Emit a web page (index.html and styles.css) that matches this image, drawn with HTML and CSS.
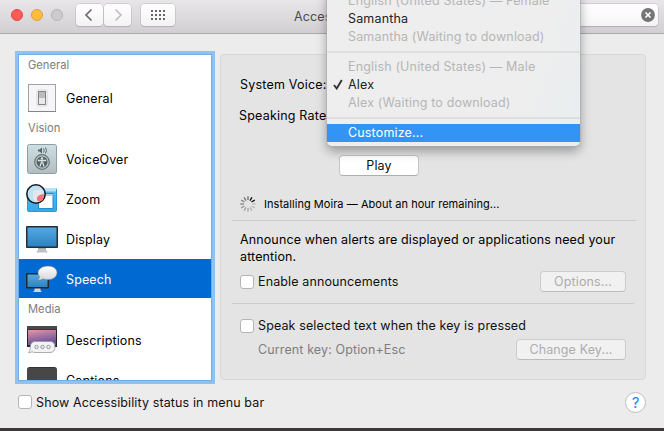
FILE: index.html
```html
<!DOCTYPE html>
<html lang="en">
<head>
<meta charset="utf-8">
<title>Accessibility</title>
<link rel="stylesheet" href="styles.css">
</head>
<body>
<div class="window">
  <header class="titlebar">
    <div class="lights"><i class="red"></i><i class="amber"></i><i class="grey"></i></div>
    <div class="nav">
      <button class="tool"><svg width="27" height="22" viewBox="0 0 27 22"><path d="M15.500 5.500 10 11l5.500 5.500" fill="none" stroke="#6b6b6b" stroke-width="1.700"/></svg></button>
      <button class="tool"><svg width="27" height="22" viewBox="0 0 27 22"><path d="M11.500 5.500 17 11l-5.500 5.500" fill="none" stroke="#bcbcbc" stroke-width="1.500"/></svg></button>
    </div>
    <button class="tool grid"><svg width="34" height="22" viewBox="0 0 34 22"><path d="M10 7h14M10 11h14M10 15h14" stroke="#666" stroke-width="2" stroke-dasharray="2 2"/></svg></button>
    <h1>Accessibility</h1>
    <div class="search"><svg width="14" height="14" viewBox="0 0 14 14"><circle cx="7" cy="7" r="6.900" fill="#757575"/><path d="m4.500 4.500 5 5m0-5-5 5" stroke="#fff" stroke-width="1.700"/></svg></div>
  </header>

  <div class="content">
    <nav class="sidebar">
      <h2 class="first">General</h2>
      <div class="item">
        <svg class="icon" width="32" height="32" viewBox="0 0 32 32"><rect x="2.500" y="2.500" width="27" height="27" fill="#f6f6f8" stroke="#a3a3a5"/><path d="M2 29.500h28" stroke="#858587"/><rect x="11" y="8" width="10" height="16" rx="1" fill="#fff" stroke="#d5d5d7"/><rect x="12.500" y="9.500" width="7" height="13" fill="#e9e9ea" stroke="#858587"/><path d="M13 10h6v6h-6z" fill="#bbbbbd"/></svg>
        <span>General</span>
      </div>
      <h2>Vision</h2>
      <div class="item">
        <svg class="icon" width="32" height="32" viewBox="0 0 32 32"><defs><linearGradient id="vo" x2="0" y2="1"><stop stop-color="#cddfe4"/><stop offset="1" stop-color="#b2bdbf"/></linearGradient></defs><rect x="1.500" y="1.500" width="29" height="29" rx="2" fill="url(#vo)" stroke="#8e9ea2"/><path d="M12 6.500h1.500L16 4.500v6l-2.500-2H12z" fill="#59676b"/><path d="M17.500 5.500q1.500 2 0 4M19.500 4.500q2 3 0 6" fill="none" stroke="#59676b"/><circle cx="16" cy="19" r="7.300" fill="#bccacd" stroke="#657378" stroke-width="1.200"/><circle cx="16" cy="19" r="5.500" fill="#536166"/><circle cx="16" cy="15.500" r="1.200" fill="#d8e2e4"/><path d="M11.800 17.500h8.400M16 17v3m-.7-.5-1.300 4m2.700-4 1.300 4" stroke="#d8e2e4" stroke-width="1.300"/></svg>
        <span>VoiceOver</span>
      </div>
      <div class="item">
        <svg class="icon" width="32" height="32" viewBox="0 0 32 32"><defs><linearGradient id="zm" x2="0" y2="1"><stop stop-color="#58bff4"/><stop offset="1" stop-color="#35a7e8"/></linearGradient></defs><rect x="1.500" y="5.500" width="29" height="23" rx="1" fill="url(#zm)" stroke="#2f97d3"/><path d="M2 5h28v3.500H2z" fill="#b6e1f8"/><path d="M12.500 10.500h14.500v15h-14.500z" fill="#fff" stroke="#1c8dcd"/><path d="M13 11h13.500v2H13z" fill="#c9c9cb"/><circle cx="10" cy="11" r="9.200" fill="#bde2f4" stroke="#191b1d" stroke-width="1.600"/><path d="M7 8.500q0-1.500 2-1.500h7.500v10Q14 19 10 19q-3-2-3-4z" fill="#e5e6e9"/><path d="M11 17q-1-5 6.500-6 1.500 4.500-2.500 7-2.500 1.500-4-1z" fill="#ef7478"/></svg>
        <span>Zoom</span>
      </div>
      <div class="item">
        <svg class="icon" width="32" height="32" viewBox="0 0 32 32"><defs><linearGradient id="screen" x2="0" y2="1"><stop stop-color="#51a9e2"/><stop offset="1" stop-color="#2e83c0"/></linearGradient></defs><path d="M12 23h8v4l2 2.500H10l2-2.500z" fill="#bfc0c2"/><path d="M12 24h8v1.500h-8z" fill="#8a8c8e"/><rect x="0" y="3" width="32" height="22" rx="1" fill="#292c30"/><path d="M1.500 4.500h29v19h-29z" fill="url(#screen)"/></svg>
        <span>Display</span>
      </div>
      <div class="item selected">
        <svg class="icon" width="32" height="32" viewBox="0 0 32 32"><defs><linearGradient id="bubble" x2="0" y2="1"><stop stop-color="#fff"/><stop offset="1" stop-color="#d6d7da"/></linearGradient></defs><path d="M8.500 25h6v2.500l1.500 1.500H7l1.500-1.500z" fill="#d3d6d8"/><rect x="0" y="10" width="23" height="15.500" rx="1" fill="#20282f"/><path d="M1.500 11.500h20v12.500h-20z" fill="url(#screen)"/><path d="M22 3c5.500 0 9 2.900 9 6.700s-3.700 7-9 7c-2 0-3.500-.3-4.800-1-1.600 1.200-3.500 1.500-5.700 1.300q2-1.300 2.200-3.500C12.500 12.500 12 11.200 12 9.700 12 5.900 16.500 3 22 3z" fill="url(#bubble)" stroke="#777d84" stroke-width=".6"/></svg>
        <span>Speech</span>
      </div>
      <h2>Media</h2>
      <div class="item">
        <svg class="icon" width="32" height="32" viewBox="0 0 32 32"><defs><linearGradient id="dusk" x2=".3" y2="1"><stop stop-color="#ed91a5"/><stop offset="1" stop-color="#60519b"/></linearGradient></defs><path d="M1 2h30v21H1z" fill="#252328"/><path d="M1 2h30v3.500H1z" fill="#4a4a4d"/><path d="M2 6h28v15H2z" fill="url(#dusk)"/><path d="M9.500 17.500H24q5 0 5 5.500T24 28.500H10q-3 0-4-.8-1 .9-3.500 1.100 1.800-1.300 1.800-5.800Q4.500 17.500 9.500 17.500z" fill="#f2f2f5" stroke="#98989e" stroke-width=".8"/><g fill="none" stroke="#8b8b91" stroke-width=".9"><circle cx="10.500" cy="23" r="1.700"/><circle cx="16.500" cy="23" r="1.700"/><circle cx="22.500" cy="23" r="1.700"/></g></svg>
        <span>Descriptions</span>
      </div>
      <div class="item">
        <svg class="icon" width="32" height="32" viewBox="0 0 32 32"><rect x="1" y="3" width="30" height="26" rx="2.500" fill="#474747"/><path d="M3 3.500h26" stroke="#333"/></svg>
        <span>Captions</span>
      </div>
    </nav>

    <main class="panel">
      <div class="label voice"><span>System Voice:</span></div>
      <div class="label rate"><span>Speaking Rate:</span></div>
      <button class="button play">Play</button>
      <div class="status">
        <svg width="16" height="16" viewBox="-8 -8 16 16" stroke-width="1.400"><path d="M0-4V-7.800" stroke="#777"/><path d="M0-4V-7.800" stroke="#111" transform="rotate(30)"/><path d="M0-4V-7.800" stroke="#111" transform="rotate(60)"/><path d="M0-4V-7.800" stroke="#c5c5c5" transform="rotate(90)"/><path d="M0-4V-7.800" stroke="#bdbdbd" transform="rotate(120)"/><path d="M0-4V-7.800" stroke="#b5b5b5" transform="rotate(150)"/><path d="M0-4V-7.800" stroke="#aaa" transform="rotate(180)"/><path d="M0-4V-7.800" stroke="#a5a5a5" transform="rotate(210)"/><path d="M0-4V-7.800" stroke="#999" transform="rotate(240)"/><path d="M0-4V-7.800" stroke="#8b8b8b" transform="rotate(270)"/><path d="M0-4V-7.800" stroke="#858585" transform="rotate(300)"/><path d="M0-4V-7.800" stroke="#777" transform="rotate(330)"/></svg>
        <span>Installing Moira — About an hour remaining...</span>
      </div>
      <hr>
      <p>Announce when alerts are displayed or applications need your attention.</p>
      <div class="line enable"><label><i class="check"></i><span>Enable announcements</span></label><button class="button off options">Options...</button></div>
      <hr class="short">
      <label class="speak"><i class="check"></i><span>Speak selected text when the key is pressed</span></label>
      <div class="line key"><span>Current key: Option+Esc</span><button class="button off change">Change Key...</button></div>
    </main>
  </div>

  <footer>
    <label><i class="check"></i><span>Show Accessibility status in menu bar</span></label>
    <button class="help">?</button>
  </footer>

  <div class="menu">
    <div class="option dim">English (United States) — Female</div>
    <div class="option">Samantha</div>
    <div class="option dim">Samantha (Waiting to download)</div>
    <div class="rule"></div>
    <div class="option dim">English (United States) — Male</div>
    <div class="option checked"><svg width="10" height="11" viewBox="0 0 10 11"><path d="m1 6 2.700 3.500L8.800 1" fill="none" stroke="#333" stroke-width="1.900"/></svg>Alex</div>
    <div class="option dim">Alex (Waiting to download)</div>
    <div class="rule last"></div>
    <div class="option active">Customize...</div>
  </div>
</div>
</body>
</html>
```
FILE: styles.css
```css
* { box-sizing: border-box; }
body {
  margin: 0;
  height: 431px;
  overflow: hidden;
  background: #3a3838;
  font: 12.500px/17px Inter, Roboto, sans-serif;
  letter-spacing: .12px;
  color: #111;
}
button { font: inherit; letter-spacing: inherit; padding: 0; margin: 0; }
svg { display: block; flex: none; }
.window { position: relative; height: 428px; background: #ececec; overflow: hidden; display: flex; flex-direction: column; }
.titlebar {
  height: 34px;
  flex: none;
  display: flex;
  align-items: flex-start;
  padding: 4px 5px 0 11px;
  background: linear-gradient(#e8e6e8, #d1cfd1);
  border-bottom: 1px solid #aaa8aa;
}
.lights { display: flex; gap: 8px; padding-top: 5px; width: 65px; }
.lights i { width: 12px; height: 12px; border-radius: 50%; border: 1px solid; }
.lights .red { background: #fc5b57; border-color: #df4744; }
.lights .amber { background: #fdbc40; border-color: #de9f34; }
.lights .grey { background: #cdcbcd; border-color: #b5b3b5; }
.nav { display: flex; gap: 1px; }
.tool { width: 27px; height: 22px; border: 0; border-radius: 4px; background: linear-gradient(#fff, #f3f3f3); box-shadow: 0 0 0 .5px #bcbabc, 0 1px 1px #aaa; }
.tool.grid { width: 34px; margin-left: 10px; }
h1 { margin: 4px 0 0 119px; font-size: 12.500px; line-height: 17px; font-weight: 400; color: #4d4b4d; }
.search { width: 200px; height: 22px; margin-left: auto; padding: 4px 3px; display: flex; justify-content: flex-end; background: linear-gradient(#fff, #f5f5f5); border-radius: 4px; box-shadow: 0 0 0 .5px #bcbabc, 0 1px 1px #aaa; margin-right: 1px; }
.content { display: flex; flex: none; height: 346px; padding: 20px 18px 0 19px; gap: 9px; }
.sidebar { width: 192px; height: 325px; margin-top: 1px; overflow: hidden; background: #fff; box-shadow: 0 0 0 1px #75ade0, 0 0 0 4px #8fc2ef; }
.sidebar h2 { margin: 0; padding-left: 9px; height: 21px; font-size: 11.200px; line-height: 21px; font-weight: 400; letter-spacing: 0; color: #7d7d7d; }
.sidebar h2.first { height: 23px; }
.item { height: 40px; display: flex; align-items: center; padding-left: 7px; gap: 8px; color: #000; }
.item.selected { color: #fff; background: linear-gradient(#0069d2 39px, #fff 39px); }
.panel { width: 426px; height: 326px; padding: 21px 9px 0 11px; background: #e4e4e4; border: 1px solid #d8d8d8; border-radius: 4px; }
.label { height: 17px; padding-left: 8px; color: #000; white-space: nowrap; letter-spacing: .2px; }
.label.rate { margin-top: 14px; padding-left: 7px; }
.button { display: block; height: 21px; line-height: 19px; border: 1px solid #c6c6c6; border-bottom-color: #aeaeae; border-radius: 4px; background: #fff; text-align: center; color: #111; }
.play { width: 80px; margin: 31px 0 0 107px; }
.status { display: flex; align-items: center; gap: 8px; height: 16px; margin: 20px 0 0 8px; font-size: 11px; letter-spacing: .04px; color: #000; }
hr { height: 1px; border: 0; margin: 8px 0 0 0; background: #cbcbcb; }
.panel p { margin: 10px 0 0 8px; line-height: 17px; color: #000; }
.line { display: flex; justify-content: space-between; align-items: center; padding: 0 10px 0 8px; height: 21px; }
.enable { margin-top: 6px; }
label { display: flex; align-items: center; gap: 4px; height: 17px; white-space: nowrap; }
.check { width: 14px; height: 14px; border: 1px solid #b5b5b5; border-radius: 3px; background: #fff; }
.button.off { color: #adadad; background: #f1f1f1; border-color: #cdcdcd; border-bottom-color: #bcbcbc; }
.options { width: 86px; }
.change { width: 110px; }
hr.short { margin: 11px 2px 0 0; }
.speak { margin: 13px 0 0 8px; }
.key { margin-top: 5px; padding-left: 26px; color: #7e7e7e; }
footer { display: flex; justify-content: space-between; align-items: center; height: 44px; padding: 0 18px; }
.help { width: 21px; height: 21px; border: 1px solid #bdbdbd; border-radius: 50%; background: #fff; color: #1684f8; font-size: 15px; line-height: 19px; letter-spacing: 0; }
.menu { position: absolute; left: 327px; top: -9px; width: 253px; height: 155px; background: linear-gradient(110deg, #eee 75%, #e9eef0); border-radius: 0 0 5px 5px; box-shadow: 0 0 0 .5px #aaa, 0 5px 11px rgba(0,0,0,.35); color: #222; letter-spacing: .16px; }
.option { height: 18px; line-height: 20px; padding-left: 21px; white-space: nowrap; }
.option.dim { color: #b5b6b7; }
.option.checked { display: flex; align-items: center; padding: 1px 0 0 6px; line-height: 18px; gap: 5px; }
.option.active { background: #3295f6; color: #fff; line-height: 18px; }
.rule { height: 12px; padding-top: 6px; }
.rule::before { content: ""; display: block; height: 2px; background: #dedede; }
.rule.last { height: 13px; }
```
